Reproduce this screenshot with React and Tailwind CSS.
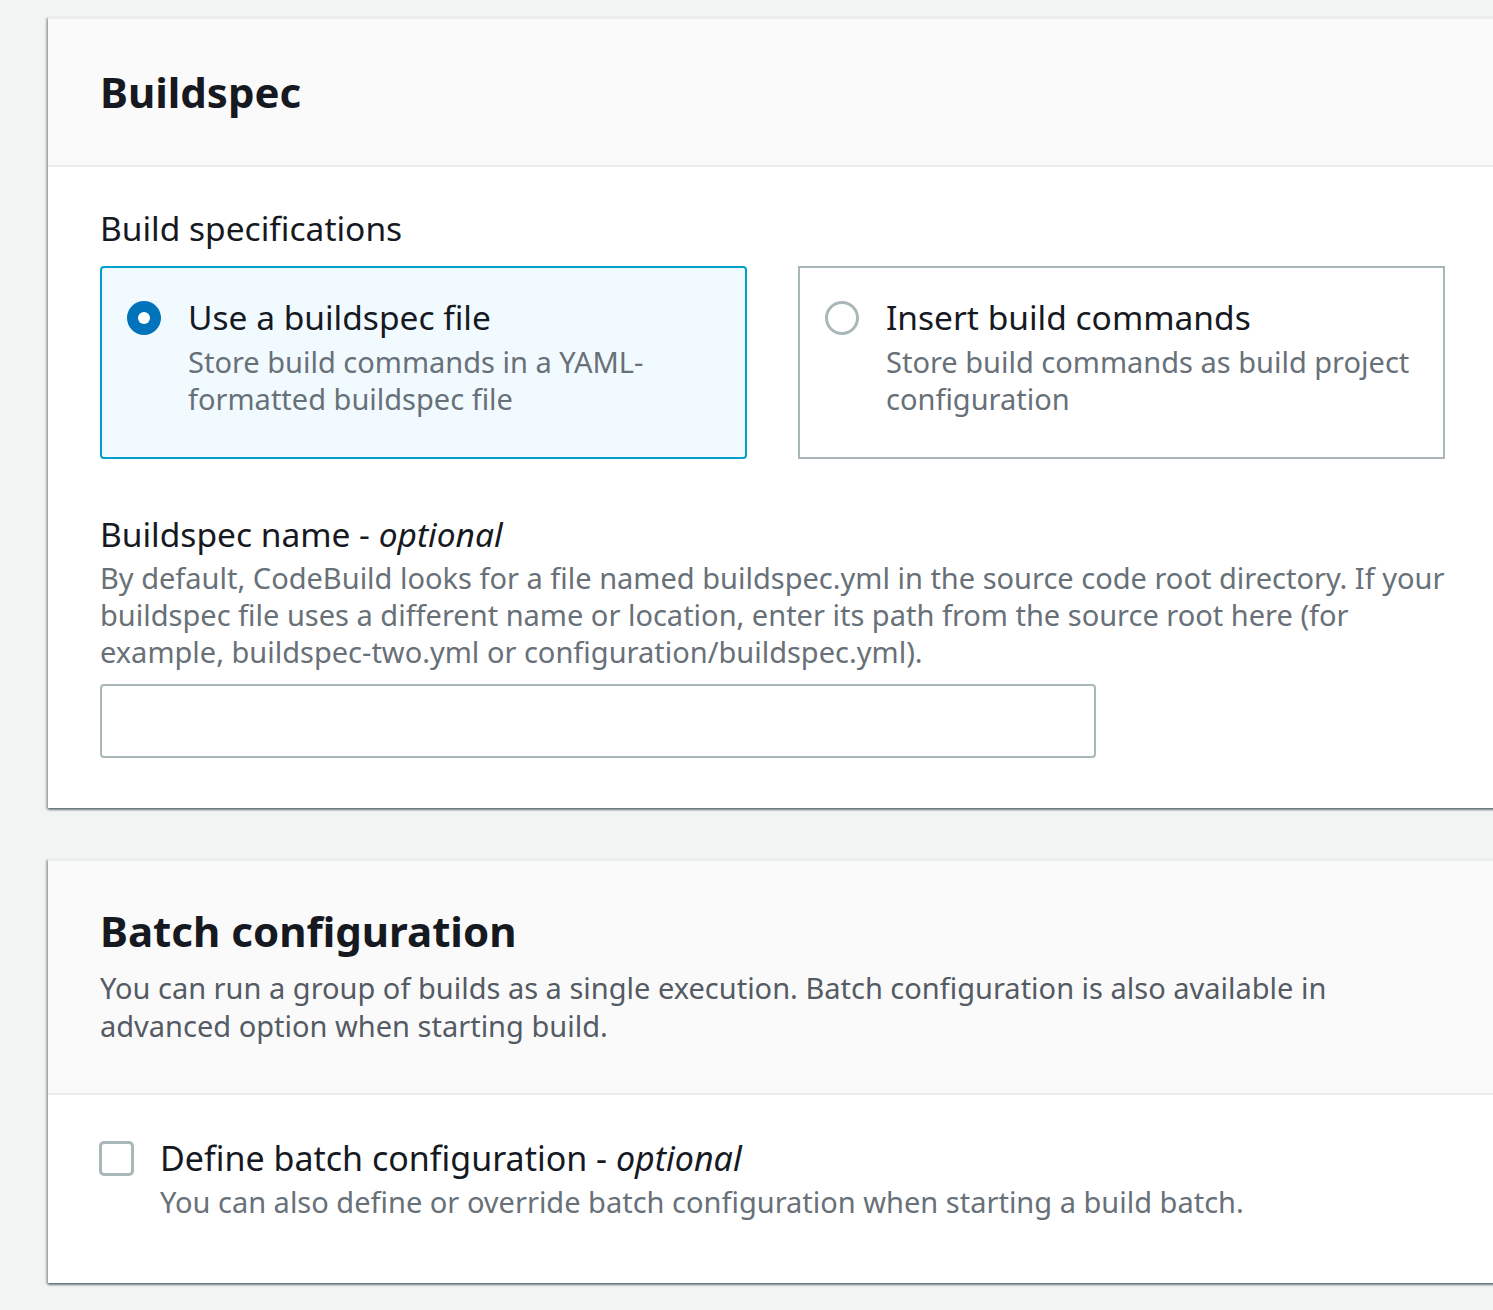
import React from 'react';

const font = { fontFamily: '"Noto Sans", "Open Sans", sans-serif' };

const Tile = ({ checked, title, desc }) => (
  <div
    className={
      checked
        ? 'flex items-start gap-[27px] rounded-[4px] border-2 border-[#00a1c9] bg-[#f1faff] pt-[31px] pb-[40px] pl-[25px] pr-[20px]'
        : 'flex items-start gap-[27px] border-2 border-[#aab7b8] bg-white pt-[31px] pb-[40px] pl-[25px] pr-[20px]'
    }
  >
    <div className="flex h-[37px] shrink-0 items-center">
      {checked ? (
        <div className="flex h-[34px] w-[34px] items-center justify-center rounded-full bg-[#0073bb]">
          <div className="h-[12px] w-[12px] rounded-full bg-white" />
        </div>
      ) : (
        <div className="h-[34px] w-[34px] rounded-full border-[3px] border-[#aab7b8] bg-white" />
      )}
    </div>
    <div>
      <div className="text-[33.5px] leading-[37px] text-[#16191f]">{title}</div>
      <div className="mt-[7px] text-[29px] leading-[37px] text-[#687078]">{desc}</div>
    </div>
  </div>
);

const App = () => {
  return (
    <div className="min-h-screen overflow-hidden bg-[#f2f3f3] pl-[48px] pt-[17px] pb-[24px]" style={font}>
      {/* Buildspec */}
      <div className="w-[1500px] border-t-2 border-[#eaeded] bg-white shadow-[0_2px_2px_0_rgba(0,28,36,0.5),-2px_1px_2px_0_rgba(0,28,36,0.25)]">
        <div className="border-b-2 border-[#eaeded] bg-[#fafafa] px-[52px] py-[49px]">
          <h2 className="text-[42px] font-bold leading-[48px] text-[#16191f]">Buildspec</h2>
        </div>
        <div className="px-[52px] pt-[43px] pb-[50px]">
          <div className="text-[33.5px] leading-[37px] text-[#16191f]">Build specifications</div>
          <div className="mt-[19px] grid w-[1345px] grid-cols-2 gap-[51px]">
            <Tile
              checked
              title="Use a buildspec file"
              desc={<>Store build commands in a YAML-<br />formatted buildspec file</>}
            />
            <Tile
              title="Insert build commands"
              desc={<>Store build commands as build project<br />configuration</>}
            />
          </div>

          <div className="mt-[57px]">
            <div className="text-[33.5px] leading-[37px] text-[#16191f]">
              Buildspec name - <i>optional</i>
            </div>
            <p className="mt-[6px] whitespace-nowrap text-[29px] leading-[37px] text-[#687078]">
              By default, CodeBuild looks for a file named buildspec.yml in the source code root directory. If your
              <br />
              buildspec file uses a different name or location, enter its path from the source root here (for
              <br />
              example, buildspec-two.yml or configuration/buildspec.yml).
            </p>
            <input
              type="text"
              className="mt-[14px] block h-[74px] w-[996px] rounded-[4px] border-2 border-[#aab7b8] bg-white px-4 text-[29px] outline-none"
            />
          </div>
        </div>
      </div>

      {/* Batch configuration */}
      <div className="mt-[51px] w-[1500px] border-t-2 border-[#eaeded] bg-white shadow-[0_2px_2px_0_rgba(0,28,36,0.5),-2px_1px_2px_0_rgba(0,28,36,0.25)]">
        <div className="border-b-2 border-[#eaeded] bg-[#fafafa] px-[52px] pt-[45px] pb-[48px]">
          <h2 className="text-[42px] font-bold leading-[50px] text-[#16191f]">Batch configuration</h2>
          <p className="mt-[13px] whitespace-nowrap text-[29px] leading-[38px] text-[#545b64]">
            You can run a group of builds as a single execution. Batch configuration is also available in
            <br />
            advanced option when starting build.
          </p>
        </div>
        <div className="flex items-start gap-[26px] px-[51px] pt-[45px] pb-[63px]">
          <div className="flex h-[37px] shrink-0 items-center">
            <div className="h-[35px] w-[35px] rounded-[5px] border-[3px] border-[#aab7b8] bg-white" />
          </div>
          <div>
            <div className="text-[34px] leading-[37px] text-[#16191f]">
              Define batch configuration - <i>optional</i>
            </div>
            <div className="mt-[6px] text-[29px] leading-[37px] text-[#687078]">
              You can also define or override batch configuration when starting a build batch.
            </div>
          </div>
        </div>
      </div>
    </div>
  );
};

export default App;
